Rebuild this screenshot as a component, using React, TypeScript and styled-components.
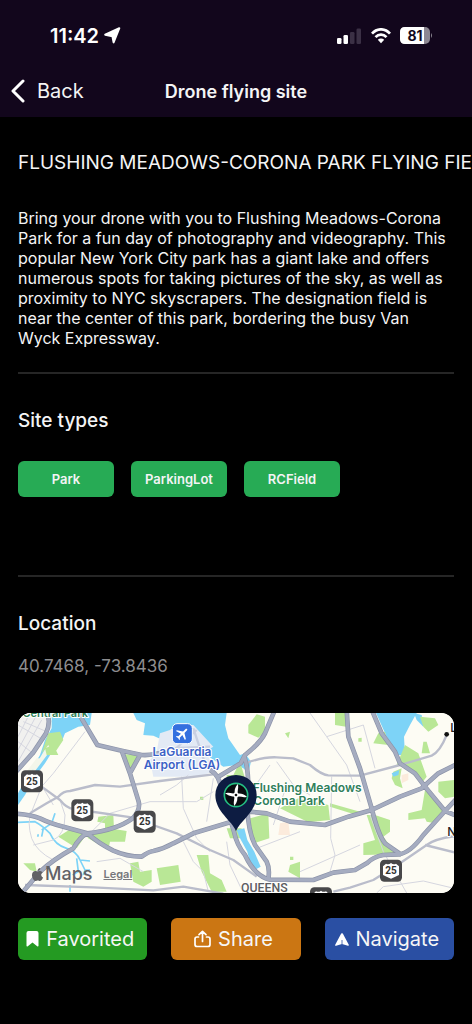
import React from "react";
import styled, { createGlobalStyle } from "styled-components";
import { FaApple } from "react-icons/fa";

const GlobalStyle = createGlobalStyle`
  *, *::before, *::after { box-sizing: border-box; }
  body {
    margin: 0;
    background: #000;
    color: #f4f4f5;
    font-family: Inter, "Liberation Sans", sans-serif;
  }
  h1, h2, p { margin: 0; }
  svg { display: block; }
`;

const Screen = styled.div`
  min-height: 100vh;
  overflow: hidden;
`;

const Header = styled.header`
  background: #12061c;
`;

const StatusBar = styled.div`
  display: flex;
  align-items: center;
  justify-content: space-between;
  height: 65px;
  padding: 6px 39px 0 50px;
`;

const StatusGroup = styled.div<{ $gap: number }>`
  display: flex;
  align-items: center;
  gap: ${(p) => p.$gap}px;
`;

const Clock = styled.time`
  font-size: 20px;
  font-weight: 600;
  line-height: 24px;
  color: #fff;
`;

const NavBar = styled.nav`
  display: grid;
  grid-template-columns: 1fr auto 1fr;
  align-items: center;
  height: 52px;
  padding: 0 10px;
`;

const BackButton = styled.button`
  display: flex;
  align-items: center;
  gap: 12px;
  justify-self: start;
  padding: 0;
  border: 0;
  background: none;
  color: #f4f4f5;
  font-family: inherit;
  font-size: 20px;
  line-height: 24px;
`;

const NavTitle = styled.h1`
  padding-top: 2px;
  font-size: 18px;
  font-weight: 600;
  line-height: 24px;
`;

const Content = styled.main`
  padding: 34px 18px 64px;
`;

const SiteName = styled.h2`
  font-size: 19px;
  font-weight: 400;
  line-height: 24px;
  white-space: nowrap;
`;

const Description = styled.p`
  margin-top: 33px;
  font-size: 16px;
  line-height: 20px;
`;

const Divider = styled.hr`
  height: 2px;
  margin: 24px 0 0;
  border: 0;
  background: #262626;
`;

const SectionTitle = styled.h2`
  margin-top: 35px;
  font-size: 19px;
  font-weight: 500;
  line-height: 24px;
`;

const ChipRow = styled.ul`
  display: flex;
  flex-wrap: wrap;
  gap: 17px;
  min-height: 90px;
  margin: 28px 0 0;
  padding: 0;
  list-style: none;
`;

const Chip = styled.li`
  width: 96px;
  height: 36px;
  border-radius: 6px;
  background: #27ab55;
  font-size: 13px;
  font-weight: 600;
  line-height: 36px;
  text-align: center;
`;

const Coordinates = styled.p`
  margin-top: 20px;
  color: #8d8d8f;
  font-size: 17px;
  line-height: 20px;
`;

const MapCard = styled.section`
  position: relative;
  height: 180px;
  margin-top: 37px;
  overflow: hidden;
  border-radius: 13px;
  background: #fcfcf3;
`;

const MapCredit = styled.div`
  position: absolute;
  left: 12px;
  bottom: 8px;
  display: flex;
  align-items: center;
  gap: 11px;
  color: #626266;
`;

const Brand = styled.span`
  display: flex;
  align-items: center;
  font-size: 18px;
  font-weight: 500;
  line-height: 22px;
`;

const LegalLink = styled.a`
  color: #77777b;
  font-size: 11px;
  font-weight: 600;
  line-height: 22px;
`;

const Actions = styled.div`
  display: grid;
  grid-template-columns: repeat(3, 1fr);
  gap: 24px;
  margin-top: 25px;
`;

const ActionButton = styled.button<{ $color: string }>`
  display: flex;
  align-items: center;
  justify-content: center;
  gap: 7px;
  height: 42px;
  padding: 0 5px 0 0;
  border: 0;
  border-radius: 6px;
  background: ${(p) => p.$color};
  color: #f6f6f6;
  font-family: inherit;
  font-size: 20px;
  line-height: 24px;
`;

const LocationArrow = () => (
  <svg width="17" height="17" viewBox="0 0 17 17" aria-hidden="true">
    <path d="M1.200 7.700 15.300 1.200 9.600 15.400 8.400 9.200Z" fill="#fff" stroke="#fff" strokeWidth="2" strokeLinejoin="round" />
  </svg>
);

const Signal = () => (
  <svg width="25" height="16" viewBox="0 0 25 16" aria-hidden="true">
    <rect x="0" y="10" width="4.500" height="6" rx="1.300" fill="#fff" />
    <rect x="6.500" y="7" width="4.500" height="9" rx="1.300" fill="#fff" />
    <rect x="13" y="4" width="4.500" height="12" rx="1.300" fill="#3b3045" />
    <rect x="19.500" y="0.500" width="4.500" height="15.500" rx="1.300" fill="#3b3045" />
  </svg>
);

const Wifi = () => (
  <svg width="20" height="16" viewBox="0 0 20 16" fill="none" stroke="#fff" strokeWidth="2.700" aria-hidden="true">
    <path d="M1 5.600C6-.1 14-.1 19 5.600" />
    <path d="M4.500 9.200C7.600 5.800 12.400 5.800 15.500 9.200" />
    <path d="M6.800 11.800C8.600 10 11.400 10 13.200 11.800L10 15.200Z" fill="#fff" stroke="none" />
  </svg>
);

const Battery = () => (
  <svg width="33" height="17" viewBox="0 0 33 17" role="img" aria-label="Battery 81%">
    <rect width="30" height="17" rx="5" fill="#8c8792" />
    <path d="M5 0H24V17H5Q0 17 0 12V5Q0 0 5 0Z" fill="#fff" />
    <path d="M31 6q2 2.500 0 5Z" fill="#8c8792" />
    <text x="15" y="13.500" textAnchor="middle" fontSize="14" fontWeight="700" fill="#12061c">81</text>
  </svg>
);

const BackChevron = () => (
  <svg width="15" height="24" viewBox="0 0 15 24" fill="none" stroke="#fff" strokeWidth="3" strokeLinecap="round" strokeLinejoin="round" aria-hidden="true">
    <path d="M13 2 3 12 13 22" />
  </svg>
);

const BookmarkIcon = () => (
  <svg width="13" height="16" viewBox="0 0 13 16" aria-hidden="true">
    <path d="M2.500 0H10.500Q12.500 0 12.500 2V14.700Q12.300 16 11.200 15.200L6.500 11.400 1.800 15.200Q.6 16 .5 14.700V2Q.5 0 2.500 0Z" fill="#fff" />
  </svg>
);

const ShareIcon = () => (
  <svg width="17" height="18" viewBox="0 0 17 18" fill="none" stroke="#fff" strokeWidth="1.700" strokeLinecap="round" strokeLinejoin="round" aria-hidden="true">
    <path d="M4.500 7H3Q1 7 1 9V14.500Q1 16.500 3 16.500H14Q16 16.500 16 14.500V9Q16 7 14 7H12.500" />
    <path d="M8.500 11.500V1.500M5 4.700 8.500 1.300 12 4.700" />
  </svg>
);

const NavigateIcon = () => (
  <svg width="14" height="13" viewBox="0 0 14 13" aria-hidden="true">
    <path d="M6.200.6Q7-.2 7.800.6L13.900 12q0 1-1 .8L7 11 1.100 12.800Q0 13 .1 12Z" fill="#fff" />
    <path d="M7 7V11" stroke="#2a4fa3" strokeWidth="0.800" />
  </svg>
);

const highways = [
  "M205 24 262 120 335 137 395 150Q430 152 460 140",
  "M335 137 360 205 386 290Q392 315 368 340 320 375 232 385 210 395 190 430 130 463 90 500L36 564",
  "M390 150 358 208",
  "M14 326Q60 328 90 340 120 355 160 365L232 385Q265 415 310 437 350 455 395 455 415 440 430 438 460 432 490 415L550 385 665 350",
  "M108 14Q125 50 108 85L70 142 14 205",
  "M795 14 765 85Q750 115 705 150L692 175 625 215",
  "M600 195Q630 210 635 260L672 380Q680 420 705 450 735 515 780 524",
  "M703 155Q715 190 715 250L712 310Q715 380 735 420L770 470Q780 490 775 522",
  "M720 320 770 325 840 350 945 360 1015 335 1085 315 1170 275 1235 250 1285 205 1345 175",
  "M1010 14 1015 95 1050 190 1085 310Q1105 390 1125 415L1175 450",
  "M1085 14 1115 85 1155 140 1170 175 1215 205 1245 245 1305 318 1345 335",
  "M1345 275 1305 318 1240 390Q1200 445 1165 448L1120 450Q1090 455 1070 475L1035 495 970 503 910 525 775 524",
];

const streets = [
  "M60 325 110 295 145 275Q160 258 180 258L255 240 330 245 450 228 610 208",
  "M95 245 150 285Q170 310 190 312L370 338 420 357 500 385 600 435 670 465 740 515",
  "M705 175Q760 155 800 157L850 160 900 180Q935 210 955 211L1050 212 1170 180 1265 152Q1290 140 1310 90",
  "M970 560 1020 548 1090 525 1170 475 1250 420Q1275 400 1345 392",
  "M1245 420 1345 445",
  "M45 540 250 547 430 556 520 545 640 566",
];

const lanes = [
  "M24 95 60 24M24 135 80 30M24 170 95 45M24 60 100 105M40 50 110 80M24 110 75 150",
  "M225 80 130 205 95 245 65 320Q50 350 65 400 80 440 130 465",
  "M150 285 165 330Q165 390 130 405L70 420M100 250 130 300",
  "M450 270 500 240 535 210M515 215 520 310 560 400 600 440M520 410 550 470 580 500 595 560",
  "M240 385 300 325 420 290 560 290 610 260",
  "M650 410 660 480 700 564M590 350 610 220M800 170 850 240 900 270M780 180 730 250",
  "M900 24 950 95 1010 180 1050 290M950 95 1060 60 1095 190",
  "M965 215 962 400 975 450 960 500M870 500 1050 420",
  "M1080 330 1120 440 1190 564M1100 564 1120 545 1240 528 1332 550",
  "M260 470 330 460 400 500M740 430 870 380M830 240 790 360",
];

const parks = [
  "M115 85 150 80 160 105 130 150 115 120 95 145ZM105 130 130 120 145 150 110 150Z",
  "M343 148 385 150 358 200Z",
  "M185 370 232 385 200 430 145 395Z",
  "M265 335 310 330 312 372 350 378 345 410 300 410 295 435 232 398 255 380 285 375 285 355 262 350Z",
  "M360 475 385 470 390 500 425 495 425 530 400 545 370 530Z",
  "M40 475 75 475 80 500 60 495Z",
  "M715 60 740 28 765 35 765 80 745 98 715 85Z",
  "M440 490 505 480 512 530 450 540ZM560 450 595 450 600 505 635 525 650 560 605 560 575 500Z",
  "M650 210 670 210 690 170 705 220 720 230 720 270 650 250Z",
  "M720 340 775 325 778 400 730 415ZM840 480 870 470 870 520 835 500Z",
  "M810 310 865 280 955 300 960 345 895 352Z",
  "M960 295 1050 320 1040 330 960 305Z",
  "M975 24 1008 24 1008 65 975 60Z",
  "M1070 330 1095 330 1140 345 1140 380 1120 395 1160 448 1060 450 1060 415 1095 405Z",
  "M1105 85 1125 80 1135 120 1090 115Z",
  "M1230 35 1275 40 1285 60 1255 80 1240 65ZM1240 110 1250 110 1260 145 1235 145Z",
  "M1185 120 1225 145 1250 215 1235 235 1190 190 1160 180ZM1150 200 1175 190 1170 220 1178 250 1155 240 1145 220Z",
  "M1245 255 1305 315 1275 355 1250 350 1245 340 1195 345 1195 325 1235 315Z",
  "M1285 230 1332 225 1332 275 1305 280 1285 260Z",
  "M1045 100 1055 98 1055 110 1045 110ZM825 85 840 80 835 100ZM570 275 580 275 580 285 570 285ZM840 455 850 455 850 465 840 465Z",
  "M650 370 695 370 690 400 660 400Z",
];

const water = [
  "M125 24 245 24 240 60 205 65 165 85 155 110 130 135 105 175 75 215 45 270 24 300 24 265 60 200 90 150 105 105 125 70Z",
  "M370 24 650 24 645 60 655 100 690 150 705 145 723 170 715 205 700 190 680 180 640 185 590 150 540 125 470 110 430 92 400 90 405 55 380 45Z",
  "M1098 24 1220 24 1200 60 1182 95 1185 150 1165 150 1130 95Z",
  "M1212 24 1235 30 1240 65 1220 45Z",
];

const ponds = [
  "M680 375 703 370 712 405 733 440 752 485 735 494 722 480 712 440 690 400Z",
  "M1145 205 1168 195 1165 210 1150 215Z",
];

const creeks = [
  "M24 352 75 350Q95 360 120 385 135 420 170 430 200 440 210 465L225 495 240 495M210 465 240 468M200 460 205 500 188 510",
  "M135 325 125 355 95 375M100 370 95 395M85 388 83 395M180 540 180 560M225 495 220 510",
];

const shields = [
  { x: 66, y: 229 },
  { x: 217, y: 316 },
  { x: 404, y: 350 },
  { x: 1143, y: 497 },
  { x: 933, y: 580 },
];

const Shield = ({ x, y }: { x: number; y: number }) => (
  <g transform={`translate(${x} ${y})`}>
    <rect x="-33" y="-33" width="66" height="66" rx="13" fill="#48484a" />
    <path d="M-15-21Q-7-17 0-23 7-17 15-21L24-13V13Q14 18 0 24-14 18-24 13V-13Z" fill="#fff" />
    <text y="11" textAnchor="middle" fontFamily="Roboto, sans-serif" fontSize="30" fontWeight="700" fill="#333">25</text>
  </g>
);

const rotor = "M-2 0C-9-9-8-20-2-33 3-27 2-17 3-9L4 0Z";

const MapDrawing = () => (
  <svg width="100%" height="180" viewBox="24 24 1308 540" preserveAspectRatio="xMidYMid slice" role="img" aria-label="Map of Queens around Flushing Meadows Corona Park">
    <rect x="24" y="24" width="1308" height="540" fill="#fdfcf4" />
    <path d="M24 24H110L112 90 24 200Z" fill="#f1f1ef" />
    <g fill="#7dd3f7">{water.map((d) => <path key={d} d={d} />)}</g>
    <path d="M450 85 480 75 500 60 550 60 610 125 585 140 620 195 570 215 430 215 420 165 440 140Z" fill="#e3eaf5" />
    <path d="M470 130 600 125M475 150 560 75M550 70 590 190" stroke="#c9d0e2" strokeWidth="7" fill="none" />
    <path d="M130 90 145 105 70 205 45 235ZM80 160 95 160 40 230 30 225Z" fill="#f3f6ea" />
    <g fill="#b9e796">{parks.map((d) => <path key={d} d={d} />)}</g>
    <path d="M810 355 835 350 840 390 805 390ZM1175 210 1195 205 1195 225 1175 235Z" fill="#fcebdc" />
    <path d={creeks.join("")} fill="none" stroke="#7dd3f7" strokeWidth="5" />
    <g fill="#7dd3f7">{ponds.map((d) => <path key={d} d={d} />)}</g>
    <g fill="none" strokeLinejoin="round">
      <path d={lanes.join("")} stroke="#d5d6df" strokeWidth="3" />
      <path d={streets.join("")} stroke="#babdcb" strokeWidth="7" />
      <path d={highways.join("")} stroke="#8c93a8" strokeWidth="14" />
      <path d={highways.join("")} stroke="#a5acc0" strokeWidth="10" />
    </g>
    {shields.map((s) => <Shield key={s.x} {...s} />)}
    <circle cx="1310" cy="88" r="7" fill="#111" />
    <g fontSize="36" fontWeight="600" stroke="#fff" strokeWidth="6" strokeLinejoin="round" paintOrder="stroke">
      <text x="234" y="37" textAnchor="end" fontSize="33" fill="#2f8157">Central Park</text>
      <g fill="#3c62c6" textAnchor="middle">
        <text x="516" y="154">LaGuardia</text>
        <text x="516" y="192">Airport (LGA)</text>
      </g>
      <g fill="#30805a">
        <text x="728" y="262">Flushing Meadows</text>
        <text x="730" y="300">Corona Park</text>
      </g>
      <text x="1321" y="80" fill="#222" fontWeight="500">L</text>
      <text x="1312" y="394" fill="#222" fontWeight="500">N</text>
      <text x="763" y="560" textAnchor="middle" fontFamily="Roboto, sans-serif" fontSize="37" fontWeight="500" fill="#5c5c60">QUEENS</text>
    </g>
    <g transform="translate(517 86)">
      <rect x="-30" y="-30" width="60" height="60" rx="14" fill="#3470df" stroke="#fff" strokeWidth="3" />
      <path
        transform="rotate(45) scale(2) translate(-11.500 -12)"
        d="M21 16v-2l-8-5V3.500C13 2.670 12.330 2 11.500 2S10 2.670 10 3.500V9l-8 5v2l8-2.500V19l-2 1.500V22l3.500-1 3.500 1v-1.500L13 19v-5.500z"
        fill="#fff"
      />
    </g>
    <g transform="translate(678 270)">
      <path d="M0 108C-12 77-62 50-62 0A62 60 0 0 1 62 0C62 50 12 77 0 108Z" fill="#0d1c42" />
      <circle r="35" fill="#090c10" stroke="#24bd82" strokeWidth="5" />
      {[12, 102, 192, 282].map((angle) => (
        <path key={angle} d={rotor} transform={`rotate(${angle})`} fill="#fff" />
      ))}
      <circle r="8" fill="#fff" />
      <circle r="4" fill="#111" />
    </g>
  </svg>
);

export default function App() {
  return (
    <>
      <GlobalStyle />
      <Screen>
        <Header>
          <StatusBar>
            <StatusGroup $gap={5}>
              <Clock>11:42</Clock>
              <LocationArrow />
            </StatusGroup>
            <StatusGroup $gap={9}>
              <Signal />
              <Wifi />
              <Battery />
            </StatusGroup>
          </StatusBar>
          <NavBar>
            <BackButton type="button">
              <BackChevron />
              Back
            </BackButton>
            <NavTitle>Drone flying site</NavTitle>
          </NavBar>
        </Header>
        <Content>
          <SiteName>FLUSHING MEADOWS-CORONA PARK FLYING FIELD</SiteName>
          <Description>
            Bring your drone with you to Flushing Meadows-Corona Park for a fun day of photography and
            videography. This popular New York City park has a giant lake and offers numerous spots for
            taking pictures of the sky, as well as proximity to NYC skyscrapers. The designation field is
            near the center of this park, bordering the busy Van Wyck Expressway.
          </Description>
          <Divider />
          <SectionTitle>Site types</SectionTitle>
          <ChipRow>
            <Chip>Park</Chip>
            <Chip>ParkingLot</Chip>
            <Chip>RCField</Chip>
          </ChipRow>
          <Divider />
          <SectionTitle>Location</SectionTitle>
          <Coordinates>40.7468, -73.8436</Coordinates>
          <MapCard>
            <MapDrawing />
            <MapCredit>
              <Brand>
                <FaApple size={15} aria-hidden="true" />
                Maps
              </Brand>
              <LegalLink href="#legal">Legal</LegalLink>
            </MapCredit>
          </MapCard>
          <Actions>
            <ActionButton type="button" $color="#249a22">
              <BookmarkIcon />
              Favorited
            </ActionButton>
            <ActionButton type="button" $color="#cb7613">
              <ShareIcon />
              Share
            </ActionButton>
            <ActionButton type="button" $color="#2a4fa3">
              <NavigateIcon />
              Navigate
            </ActionButton>
          </Actions>
        </Content>
      </Screen>
    </>
  );
}
